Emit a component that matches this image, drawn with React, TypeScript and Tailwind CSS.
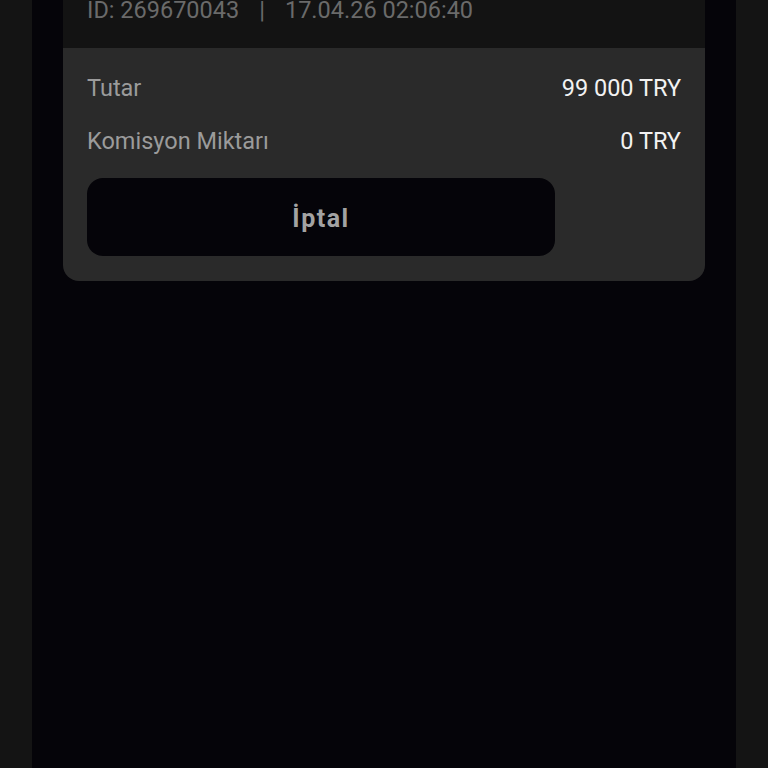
export default function App() {
  return (
    <div
      className="flex h-[768px] w-[768px] justify-center overflow-hidden bg-[#141414]"
      style={{ fontFamily: 'Roboto, "Liberation Sans", sans-serif' }}
    >
      <div className="h-full w-[704px] bg-[#050409] px-[31px]">
        <div className="overflow-hidden rounded-b-[16px] bg-[#2a2a2a]">
          {/* header strip, scrolled partly out of view */}
          <div className="flex h-[48px] items-start bg-[#131313] px-6">
            <div className="-mt-[5px] flex items-center gap-[20px] text-[23.5px] leading-[30px] text-[#6a6a6a]">
              <span>ID: 269670043</span>
              <span>|</span>
              <span>17.04.26 02:06:40</span>
            </div>
          </div>

          <div className="px-6 pb-[25px] pt-[26px]">
            <div className="flex h-[30px] items-center justify-between text-[23.5px]">
              <span className="text-[#9b9b9b]">Tutar</span>
              <span className="text-[#f2f2f2]">99 000 TRY</span>
            </div>
            <div className="mt-[23px] flex h-[30px] items-center justify-between text-[23.5px]">
              <span className="text-[#9b9b9b]">Komisyon Miktarı</span>
              <span className="text-[#f2f2f2]">0 TRY</span>
            </div>
            <button className="mt-[21px] flex h-[78px] w-[468px] items-center justify-center rounded-[16px] bg-[#050409] pt-[3px] text-[25px] font-bold tracking-[1.5px] text-[#a3a3a3]">
              İptal
            </button>
          </div>
        </div>
      </div>
    </div>
  );
}
